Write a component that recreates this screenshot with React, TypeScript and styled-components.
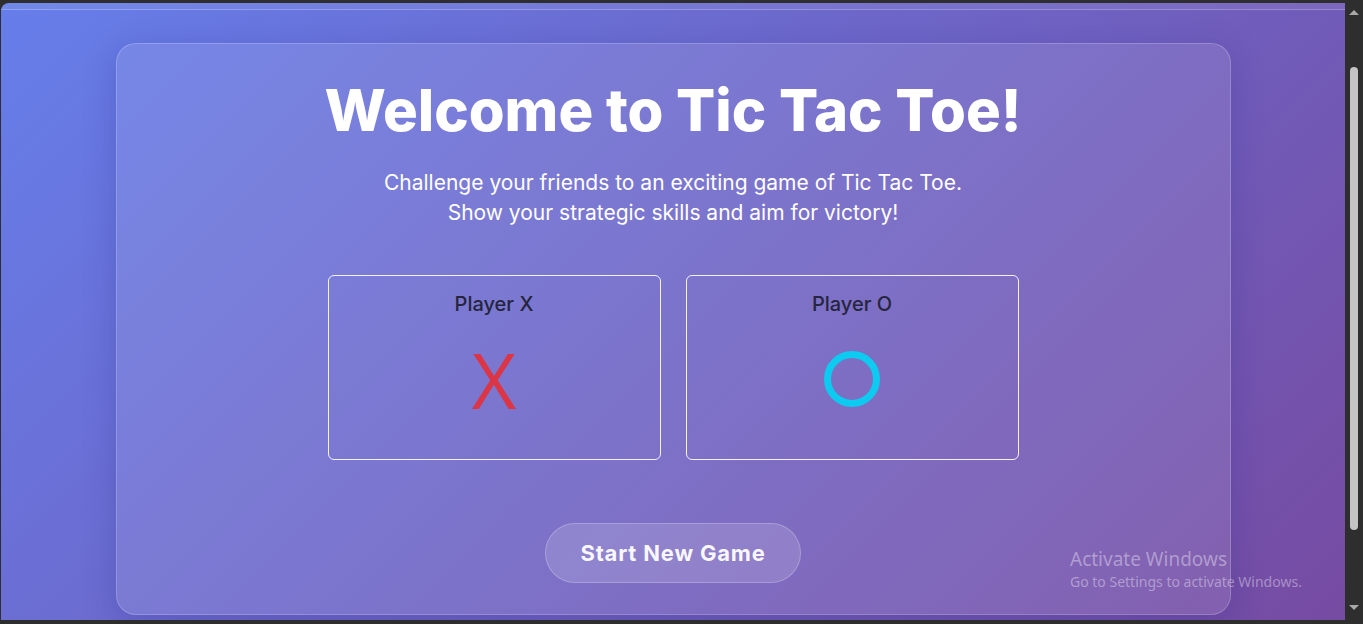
import React from "react";
import styled, { createGlobalStyle } from "styled-components";

const Global = createGlobalStyle`
  html, body { margin: 0; padding: 0; }
  body {
    background: #2e2e2e;
    font-family: "Inter", "Noto Sans", sans-serif;
    overflow: hidden;
  }
`;

const Frame = styled.div`
  display: flex;
  width: 1363px;
  height: 624px;
  padding: 3px 0 4px 1px;
  box-sizing: border-box;
`;

const Viewport = styled.div`
  position: relative;
  flex: 1;
  border-top-left-radius: 8px;
  overflow: hidden;
  background: linear-gradient(135deg, #667eea 0%, #764ba2 100%);
  display: flex;
  flex-direction: column;
  align-items: center;
`;

const TopBand = styled.div`
  align-self: stretch;
  height: 6px;
  background: rgba(255, 255, 255, 0.08);
  border-bottom: 1px solid rgba(255, 255, 255, 0.22);
  flex-shrink: 0;
`;

const Card = styled.main`
  margin-top: 33px;
  width: 1115px;
  flex-shrink: 0;
  box-sizing: border-box;
  height: 572px;
  border-radius: 20px;
  background: rgba(255, 255, 255, 0.1);
  border: 1px solid rgba(255, 255, 255, 0.2);
  box-shadow: 0 8px 32px rgba(31, 38, 135, 0.25);
  display: flex;
  flex-direction: column;
  align-items: center;
  padding-top: 32px;
`;

const Title = styled.h1`
  margin: 0;
  font-size: 58px;
  line-height: 68px;
  font-weight: 800;
  color: #ffffff;
  letter-spacing: 0;
`;

const Subtitle = styled.p`
  margin: 24px 0 0;
  font-size: 21px;
  line-height: 30px;
  color: #ffffff;
  text-align: center;
  font-weight: 400;
`;

const Players = styled.div`
  display: flex;
  gap: 25px;
  margin-top: 47px;
`;

const PlayerBox = styled.div`
  width: 333px;
  height: 185px;
  box-sizing: border-box;
  border: 1px solid rgba(255, 255, 255, 0.9);
  border-radius: 6px;
  display: flex;
  flex-direction: column;
  align-items: center;
  padding-top: 14px;
`;

const PlayerName = styled.div`
  font-size: 20px;
  line-height: 28px;
  color: #25253d;
  font-weight: 500;
`;

const Mark = styled.div<{ $color: string }>`
  margin-top: 22px;
  font-family: "Open Sans", "Noto Sans", sans-serif;
  font-size: 77px;
  line-height: 80px;
  font-weight: 400;
  color: ${(p) => p.$color};
`;

const Ring = styled.div`
  margin-top: 33px;
  width: 56px;
  height: 56px;
  box-sizing: border-box;
  border: 7px solid #0dcaf0;
  border-radius: 50%;
`;

const StartButton = styled.button`
  margin-top: 63px;
  width: 256px;
  height: 60px;
  border-radius: 30px;
  background: rgba(255, 255, 255, 0.14);
  border: 1px solid rgba(255, 255, 255, 0.22);
  color: rgba(255, 255, 255, 0.95);
  font-family: "Inter", "Noto Sans", sans-serif;
  font-size: 22px;
  letter-spacing: 0.8px;
  font-weight: 700;
  cursor: pointer;
`;

const Watermark = styled.div`
  position: absolute;
  left: 1069px;
  top: 543px;
  font-family: "Noto Sans", "Open Sans", sans-serif;
  color: rgba(255, 255, 255, 0.38);
`;

const WmTitle = styled.div`
  font-size: 19px;
  line-height: 26px;
`;

const WmSub = styled.div`
  font-size: 14px;
  line-height: 20px;
`;

const Scrollbar = styled.div`
  width: 18px;
  display: flex;
  flex-direction: column;
  align-items: center;
  background: #2e2e2e;
  margin-top: -3px;
  margin-bottom: -4px;
  padding-top: 10px;
`;

const Arrow = styled.div<{ $down?: boolean }>`
  width: 0;
  height: 0;
  border-left: 5px solid transparent;
  border-right: 5px solid transparent;
  ${(p) =>
    p.$down
      ? "border-top: 5px solid #a8a8a8;"
      : "border-bottom: 5px solid #a8a8a8;"}
`;

const Thumb = styled.div`
  margin-top: 52px;
  width: 8px;
  height: 463px;
  border-radius: 4px;
  background: #c4c4c4;
`;

const Spacer = styled.div`
  flex: 1;
`;

const BottomArrow = styled.div`
  margin-bottom: 14px;
`;

export default function App() {
  return (
    <>
      <Global />
      <Frame>
        <Viewport>
          <TopBand />
          <Card>
            <Title>Welcome to Tic Tac Toe!</Title>
            <Subtitle>
              Challenge your friends to an exciting game of Tic Tac Toe.
              <br />
              Show your strategic skills and aim for victory!
            </Subtitle>
            <Players>
              <PlayerBox>
                <PlayerName>Player X</PlayerName>
                <Mark $color="#dc3545">X</Mark>
              </PlayerBox>
              <PlayerBox>
                <PlayerName>Player O</PlayerName>
                <Ring />
              </PlayerBox>
            </Players>
            <StartButton>Start New Game</StartButton>
          </Card>
          <Watermark>
            <WmTitle>Activate Windows</WmTitle>
            <WmSub>Go to Settings to activate Windows.</WmSub>
          </Watermark>
        </Viewport>
        <Scrollbar>
          <Arrow />
          <Thumb />
          <Spacer />
          <BottomArrow>
            <Arrow $down />
          </BottomArrow>
        </Scrollbar>
      </Frame>
    </>
  );
}
